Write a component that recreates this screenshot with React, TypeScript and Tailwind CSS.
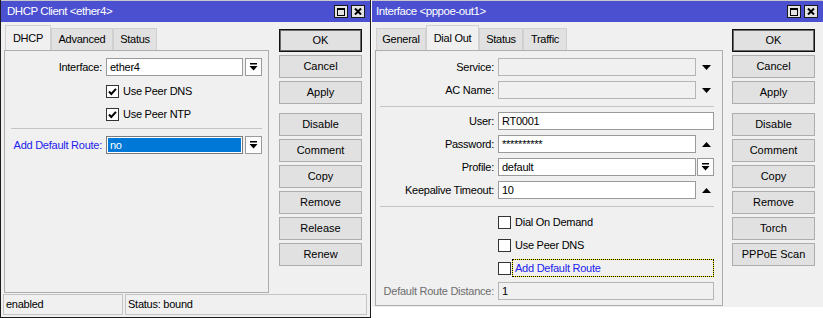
import React from "react";

type Tab = { label: string; w: string };

function TitleBar({ title, pad }: { title: string; pad: string }) {
  return (
    <div className={`flex h-[22px] shrink-0 items-center border-t border-[#c8c8c8] bg-[#4b50d0] pr-[5px] text-white ${pad}`}>
      <span className="flex-1 text-[11.5px] tracking-[-0.45px]">{title}</span>
      <div className="flex gap-[3px]">
        <div className="flex h-[13px] w-[14px] items-center justify-center border border-[#1a1a1a] bg-[#e4e4e4]">
          <div className="h-[8px] w-[8px] border border-t-2 border-black" />
        </div>
        <div className="flex h-[13px] w-[14px] items-center justify-center border border-[#1a1a1a] bg-[#e4e4e4]">
          <svg width="8" height="7" viewBox="0 0 8 7">
            <path d="M1 0.5 L7 6.5 M7 0.5 L1 6.5" stroke="black" strokeWidth="2" />
          </svg>
        </div>
      </div>
    </div>
  );
}

function Tabs({ tabs, active }: { tabs: Tab[]; active: number }) {
  return (
    <div className="flex h-[25px] shrink-0 items-end pl-[1px]">
      {tabs.map((t, i) => (
        <div
          key={t.label}
          className={
            i === active
              ? `flex h-[25px] items-center justify-center border border-b-0 border-[#d0d0d0] bg-[#f0f0f0] ${t.w}`
              : `flex h-[22px] items-center justify-center border border-b-0 border-[#d0d0d0] bg-[#e1e1e1] ${t.w}`
          }
        >
          {t.label}
        </div>
      ))}
    </div>
  );
}

function Buttons({ labels }: { labels: string[] }) {
  return (
    <div className="flex w-[83px] flex-col gap-[3px]">
      {labels.map((l, i) => (
        <div
          key={l}
          className={`flex h-[23px] items-center justify-center bg-[#e1e1e1] text-[11px] tracking-normal ${
            i === 0 ? "border border-[#111] shadow-[inset_0_0_0_1px_#6a6a6a]" : "border border-[#adadad]"
          } ${i === 3 ? "mt-[6px]" : ""}`}
        >
          {l}
        </div>
      ))}
    </div>
  );
}

function DropIcon() {
  return (
    <svg width="9" height="8" viewBox="0 0 9 8">
      <rect x="1" y="0" width="7" height="1.5" fill="black" />
      <polygon points="0.5,3 8.5,3 4.5,7.5" fill="black" />
    </svg>
  );
}

function DropBtn() {
  return (
    <div className="flex h-[18px] w-[17px] items-center justify-center border border-[#9a9a9a] bg-[#fdfdfd]">
      <DropIcon />
    </div>
  );
}

function Arrow({ up }: { up?: boolean }) {
  return (
    <div className="flex h-[18px] w-[18px] items-center pl-[6px]">
      <svg width="9" height="5" viewBox="0 0 9 5">
        <polygon points={up ? "0,5 9,5 4.5,0" : "0,0 9,0 4.5,5"} fill="black" />
      </svg>
    </div>
  );
}

function Check({ on }: { on?: boolean }) {
  return (
    <div className="flex h-[13px] w-[13px] shrink-0 items-center justify-center border border-[#333] bg-white">
      {on && (
        <svg width="9" height="9" viewBox="0 0 9 9">
          <polyline points="1,4.5 3.3,7 8,1.8" fill="none" stroke="black" strokeWidth="2" />
        </svg>
      )}
    </div>
  );
}

function Input({ w, value, muted }: { w: string; value?: string; muted?: boolean }) {
  return (
    <div
      className={`flex h-[18px] items-center border pl-[3px] ${w} ${
        muted ? "border-[#b5b5b5] bg-[#f0f0f0]" : "border-[#9a9a9a] bg-white"
      }`}
    >
      {value}
    </div>
  );
}

function DhcpWindow() {
  return (
    <div className="flex h-[318px] w-[371px] shrink-0 flex-col border-x border-b border-[#1c1c1c] bg-[#f0f0f0]">
      <TitleBar title="DHCP Client <ether4>" pad="pl-[6px]" />
      <div className="flex min-h-0 flex-1">
        <div className="ml-[3px] mt-[3px] flex w-[265px] flex-col">
          <Tabs
            active={0}
            tabs={[
              { label: "DHCP", w: "w-[46px]" },
              { label: "Advanced", w: "w-[62px]" },
              { label: "Status", w: "w-[44px]" },
            ]}
          />
          <div className="flex flex-1 flex-col border border-[#adadad] pt-[7px]">
            <div className="flex items-center">
              <span className="w-[97px] text-right">Interface:</span>
              <div className="ml-[4px]">
                <Input w="w-[137px]" value="ether4" />
              </div>
              <div className="ml-[2px]">
                <DropBtn />
              </div>
            </div>
            <div className="mt-[9px] flex items-center pl-[101px]">
              <Check on />
              <span className="ml-[4px]">Use Peer DNS</span>
            </div>
            <div className="mt-[10px] flex items-center pl-[101px]">
              <Check on />
              <span className="ml-[4px]">Use Peer NTP</span>
            </div>
            <div className="ml-[6px] mt-[7px] h-px w-[251px] bg-[#c4c4c4]" />
            <div className="mt-[7px] flex items-center">
              <span className="w-[97px] text-right text-[#2222ee]">Add Default Route:</span>
              <div className="ml-[4px] h-[18px] w-[137px] border border-[#7a7a7a] bg-white p-px">
                <div className="flex h-full items-center bg-[#0078d7] pl-[2px] text-white">no</div>
              </div>
              <div className="ml-[2px]">
                <DropBtn />
              </div>
            </div>
          </div>
        </div>
        <div className="ml-[10px] mt-[7px]">
          <Buttons labels={["OK", "Cancel", "Apply", "Disable", "Comment", "Copy", "Remove", "Release", "Renew"]} />
        </div>
      </div>
      <div className="flex h-[24px] shrink-0 gap-[2px] pl-[2px] pt-[1px]">
        <div className="flex h-[21px] w-[120px] items-center border border-[#c4c4c4] pl-[2px]">enabled</div>
        <div className="flex h-[21px] w-[242px] items-center border border-[#c4c4c4] pl-[2px]">Status: bound</div>
      </div>
    </div>
  );
}

function Row({ label, children, gray }: { label: string; children: React.ReactNode; gray?: boolean }) {
  return (
    <div className="flex items-center">
      <span className={`w-[118px] text-right ${gray ? "text-[#6d6d6d]" : ""}`}>{label}</span>
      <div className="ml-[4px] flex items-center">{children}</div>
    </div>
  );
}

function PppoeWindow() {
  return (
    <div className="ml-[1px] flex h-[307px] w-[451px] shrink-0 flex-col bg-[#f0f0f0]">
      <TitleBar title="Interface <pppoe-out1>" pad="pl-[4px]" />
      <div className="flex min-h-0 flex-1 pb-[1px]">
        <div className="ml-[3px] mt-[3px] flex w-[348px] flex-col">
          <Tabs
            active={1}
            tabs={[
              { label: "General", w: "w-[50px]" },
              { label: "Dial Out", w: "w-[53px]" },
              { label: "Status", w: "w-[44px]" },
              { label: "Traffic", w: "w-[44px]" },
            ]}
          />
          <div className="flex flex-1 flex-col gap-[5px] border border-[#adadad] pt-[7px]">
            <Row label="Service:">
              <Input w="w-[198px]" muted />
              <Arrow />
            </Row>
            <Row label="AC Name:">
              <Input w="w-[198px]" muted />
              <Arrow />
            </Row>
            <div className="ml-[4px] mt-[2px] h-px w-[334px] bg-[#c4c4c4]" />
            <Row label="User:">
              <Input w="w-[216px]" value="RT0001" />
            </Row>
            <Row label="Password:">
              <Input w="w-[198px]" value="**********" />
              <Arrow up />
            </Row>
            <Row label="Profile:">
              <Input w="w-[198px]" value="default" />
              <div className="ml-[1px]">
                <DropBtn />
              </div>
            </Row>
            <Row label="Keepalive Timeout:">
              <Input w="w-[198px]" value="10" />
              <Arrow up />
            </Row>
            <div className="ml-[4px] mt-[2px] h-px w-[334px] bg-[#c4c4c4]" />
            <div className="mt-[1px] flex h-[18px] items-center pl-[122px]">
              <Check />
              <span className="ml-[4px]">Dial On Demand</span>
            </div>
            <div className="flex h-[18px] items-center pl-[122px]">
              <Check />
              <span className="ml-[4px]">Use Peer DNS</span>
            </div>
            <div className="flex h-[18px] items-center pl-[122px]">
              <Check />
              <div className="ml-[1px] h-[18px] w-[202px] border border-dotted border-black bg-[#ffff00]">
                <div className="flex h-full items-center bg-[#f0f0f0] pl-[2px] text-[#2222ee]">Add Default Route</div>
              </div>
            </div>
            <Row label="Default Route Distance:" gray>
              <Input w="w-[216px]" value="1" muted />
            </Row>
          </div>
        </div>
        <div className="ml-[9px] mt-[7px]">
          <Buttons labels={["OK", "Cancel", "Apply", "Disable", "Comment", "Copy", "Remove", "Torch", "PPPoE Scan"]} />
        </div>
      </div>
    </div>
  );
}

export default function App() {
  return (
    <div className="flex h-[318px] w-[823px] items-start overflow-hidden bg-white font-['Liberation_Sans',Arial,sans-serif] text-[11px] leading-none tracking-[-0.25px] text-black">
      <DhcpWindow />
      <PppoeWindow />
    </div>
  );
}
